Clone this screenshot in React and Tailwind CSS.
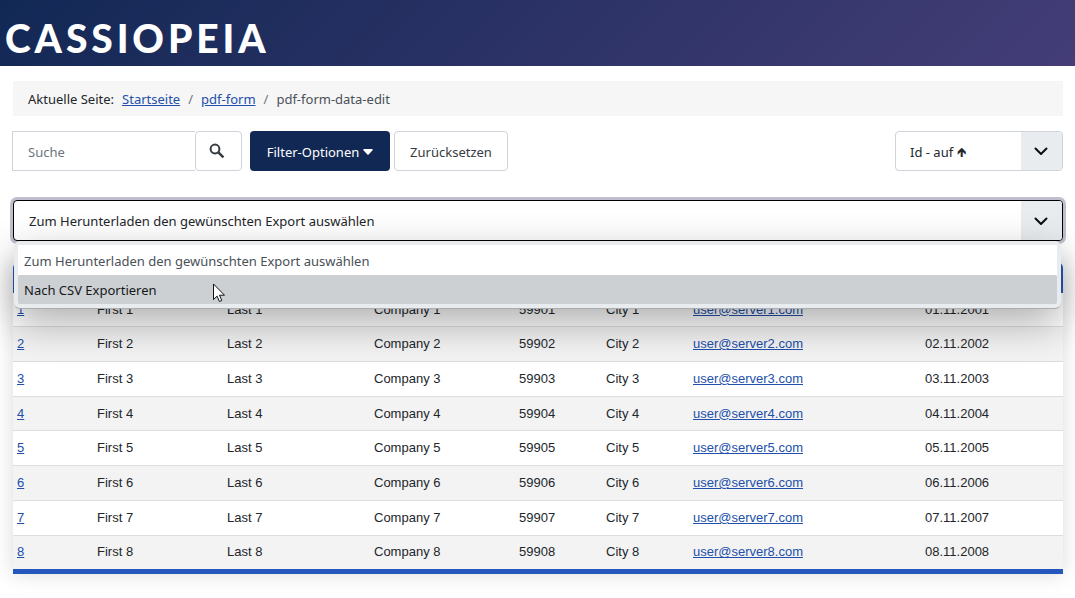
import { useState } from 'react';

const rows = [1, 2, 3, 4, 5, 6, 7, 8].map(n => ({
  id: n,
  first: `First ${n}`,
  last: `Last ${n}`,
  company: `Company ${n}`,
  zip: `5990${n}`,
  city: `City ${n}`,
  email: `user@server${n}.com`,
  date: `0${n}.11.200${n}`,
}));

const exportOptions = [
  { value: '', label: 'Zum Herunterladen den gewünschten Export auswählen' },
  { value: 'csv', label: 'Nach CSV Exportieren' },
];

const Chevron = () => (
  <span className="pointer-events-none absolute inset-y-px right-px flex w-[41px] items-center justify-center rounded-r-[3px] bg-[#e9ecef] pr-0.5">
    <svg width="16" height="16" viewBox="0 0 16 16" fill="none" aria-hidden="true">
      <path d="M2.5 5.5L8 11l5.500-5.500" stroke="#0c0c10" strokeWidth="2" strokeLinecap="round" strokeLinejoin="round" />
    </svg>
  </span>
);

const Cursor = () => (
  <svg
    className="pointer-events-none absolute top-[42px] left-[198px]"
    width="14"
    height="20"
    viewBox="0 0 14 20"
    aria-hidden="true"
  >
    <path
      d="M1.5 1v15.6l3.6-3.5 2.3 5.4 2.4-1-2.3-5.3h5z"
      fill="#fff"
      stroke="#111"
      strokeWidth="1"
      strokeLinejoin="round"
    />
  </svg>
);

const Breadcrumb = () => (
  <nav aria-label="Breadcrumb" className="flex h-[35px] items-center bg-[#f6f6f6] px-[15px]">
    <span className="mr-2">Aktuelle Seite:</span>
    <ol className="flex gap-2">
      <li>
        <a href="#startseite" className="text-[#224faa] underline">Startseite</a>
      </li>
      <li className="flex gap-2">
        <span className="text-[#6c757d]">/</span>
        <a href="#pdf-form" className="text-[#224faa] underline">pdf-form</a>
      </li>
      <li className="flex gap-2 text-[#495057]">
        <span className="text-[#6c757d]">/</span>
        <span>pdf-form-data-edit</span>
      </li>
    </ol>
  </nav>
);

const Toolbar = () => (
  <form className="mt-[15px] -ml-px flex h-10 justify-between" onSubmit={e => e.preventDefault()}>
    <div className="flex">
      <input
        type="search"
        aria-label="Suche"
        placeholder="Suche"
        className="w-[183px] border border-r-0 border-[#ced4da] bg-white px-[15px] pt-0.5 outline-none placeholder:text-[#6c757d]"
      />
      <button
        type="submit"
        aria-label="Suchen"
        className="mr-2 flex w-[47px] items-center justify-center rounded border border-[#ced4da] bg-white pr-1"
      >
        <svg width="16" height="16" viewBox="0 0 16 16" fill="none" stroke="#353b41" aria-hidden="true">
          <circle cx="6" cy="6" r="4.4" strokeWidth="2" />
          <path d="M9.4 9.4l5 5" strokeWidth="2.6" />
        </svg>
      </button>
      <button type="button" className="mr-1 flex w-[140px] items-center justify-center gap-1 rounded bg-[#112855] pt-0.5 text-white">
        Filter-Optionen
        <svg width="10" height="6" viewBox="0 0 10 6" fill="currentColor" aria-hidden="true">
          <path d="M1 0h8a.8.8 0 0 1 .6 1.3L5.6 5.6a.8.8 0 0 1-1.2 0L.4 1.3A.8.8 0 0 1 1 0z" />
        </svg>
      </button>
      <button type="reset" className="w-[114px] rounded border border-[#ced4da] bg-white pt-0.5 text-[#353b41]">
        Zurücksetzen
      </button>
    </div>
    <div className="relative w-[168px]">
      <select
        aria-label="Sortierung"
        className="h-full w-full appearance-none rounded border border-[#ced4da] bg-white pt-0.5 pl-[14px] font-['Noto_Sans','DejaVu_Sans',sans-serif] outline-none"
      >
        <option>Id - auf 🡹</option>
        <option>Id - ab 🡻</option>
      </select>
      <Chevron />
    </div>
  </form>
);

const ExportSelect = () => {
  const [value, setValue] = useState('');

  return (
    <div className="relative mt-[29px]">
      <select
        aria-label="Export"
        value={value}
        onChange={e => setValue(e.target.value)}
        className="block h-[41px] w-full appearance-none rounded border border-black bg-white pl-[15px] ring-3 ring-[#bfbfcd] outline-none"
      >
        {exportOptions.map(o => (
          <option key={o.value} value={o.value}>{o.label}</option>
        ))}
      </select>
      <Chevron />

      <div className="absolute top-full right-[2px] left-px z-10 rounded-md border-b border-[#a9adb0] bg-[#e9ecef] p-1 shadow-[0_14px_40px_rgba(0,0,0,0.32)]">
        <ul role="listbox" aria-label="Export auswählen">
          <li role="option" aria-selected="false" className="flex h-[30px] items-center bg-white px-[6px] pt-0.5 text-[#495057]">
            Zum Herunterladen den gewünschten Export auswählen
          </li>
          <li role="option" aria-selected="true" className="flex h-[29px] items-center rounded-xs bg-[#cdd0d3] px-[6px] text-[#16181b]">
            Nach CSV Exportieren
          </li>
        </ul>
        <Cursor />
      </div>
    </div>
  );
};

const DataTable = () => (
  <div className="mt-[21px] rounded-t-md border-b-5 border-[#2357bb] shadow-[0_0_20px_rgba(0,0,0,0.15)]">
    <table className="h-[307px] w-full table-fixed border-collapse text-left font-['Liberation_Sans',sans-serif] text-[13px] leading-4">
      <thead>
        <tr className="h-[31px] bg-[#2357bb] text-white">
          <th aria-label="Id" className="w-20 rounded-tl-md" />
          <th aria-label="Vorname" className="w-[130px]" />
          <th aria-label="Nachname" className="w-[147px]" />
          <th aria-label="Firma" className="w-[145px]" />
          <th aria-label="PLZ" className="w-[87px]" />
          <th aria-label="Ort" className="w-[87px]" />
          <th aria-label="E-Mail" className="w-[232px]" />
          <th aria-label="Datum" className="rounded-tr-md" />
        </tr>
      </thead>
      <tbody>
        {rows.map(r => (
          <tr key={r.id} className="border-b border-[#dddddd] last:border-b-0 odd:bg-white even:bg-[#f3f3f3]">
            <td className="px-1"><a href={`#${r.id}`} className="text-[#224faa] underline">{r.id}</a></td>
            <td className="px-1">{r.first}</td>
            <td className="px-1">{r.last}</td>
            <td className="px-1">{r.company}</td>
            <td className="px-1">{r.zip}</td>
            <td className="px-1">{r.city}</td>
            <td className="px-1"><a href={`mailto:${r.email}`} className="text-[#224faa] underline">{r.email}</a></td>
            <td className="px-1">{r.date}</td>
          </tr>
        ))}
      </tbody>
    </table>
  </div>
);

const App = () => (
  <div className="min-h-screen bg-white font-['Noto_Sans',sans-serif] text-[13px] leading-5 text-[#22262a]">
    <header className="flex h-[66px] items-center bg-linear-135 from-[#112855] to-[#443d77] px-[5px] pt-[10px]">
      <a href="#home" className="font-['Lato',sans-serif] text-[39px] leading-10 font-black tracking-widest text-white">
        CASSIOPEIA
      </a>
    </header>
    <main className="pt-[15px] pr-3 pb-6 pl-[13px]">
      <Breadcrumb />
      <Toolbar />
      <ExportSelect />
      <DataTable />
    </main>
  </div>
);

export default App;
